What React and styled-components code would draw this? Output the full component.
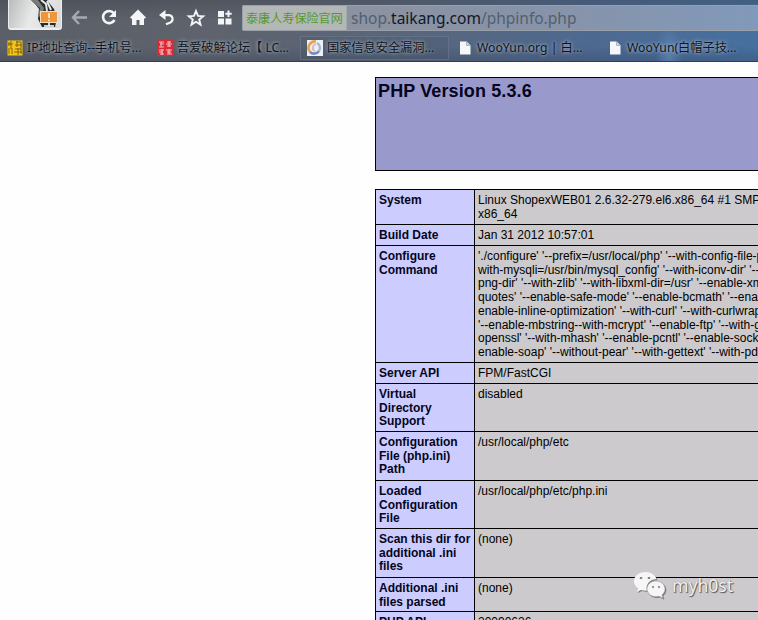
import React from "react";
import styled, { createGlobalStyle } from "styled-components";

const Global = createGlobalStyle`
  * { box-sizing: border-box; }
  body { margin: 0; background: #fff; overflow: hidden; }
`;

const Page = styled.div`
  position: relative;
  width: 758px;
  height: 620px;
  overflow: hidden;
  background: #fefefe;
  font-family: "Liberation Sans", Arial, sans-serif;
`;

const Chrome = styled.header`
  height: 62px;
  background:
    radial-gradient(ellipse 14px 30px at 669px 56px, rgba(130, 180, 225, 0.35), transparent),
    linear-gradient(180deg, rgba(50, 53, 60, 0.3), transparent 35%, transparent 75%, rgba(40, 52, 80, 0.25)),
    linear-gradient(90deg, #5b5f67 0, #5e636d 220px, #5a6679 400px, #4e6990 590px, #47709f 758px);
  border-bottom: 1px solid #343c52;
  overflow: hidden;
`;

const Toolbar = styled.div`
  display: flex;
  height: 35px;
  align-items: flex-start;
`;

const Avatar = styled.div`
  width: 54px;
  height: 30px;
  margin-left: 8px;
  border: 1px solid #eceded;
  border-top: 0;
  border-bottom-width: 2px;
  border-radius: 0 0 3px 3px;
  background: linear-gradient(110deg, #b9bcbc, #e8e9e8 45%, #d8d9d8);
  overflow: hidden;
  svg { display: block; }
`;

const NavIcons = styled.div`
  display: flex;
  margin: 9px 0 0 9px;
  width: 171px;
  gap: 11px;
  svg { display: block; width: 18px; height: 18px; flex: none; overflow: visible; }
`;

const Address = styled.div`
  display: flex;
  flex: 1;
  height: 26px;
  margin-top: 5px;
  border: 1px solid #99a0aa;
  border-right: 0;
  border-radius: 2px 0 0 2px;
  background: linear-gradient(90deg, #8e929c, #8793a9 60%, #8199ba);
`;

const SiteName = styled.div`
  width: 104px;
  padding-left: 3px;
  background: #b3b8b7;
  border-right: 1px solid #a2aaa9;
  color: #56982c;
  font: 12.1px/24px "Noto Sans CJK SC", sans-serif;
  white-space: nowrap;
`;

const Url = styled.div`
  padding-left: 4px;
  color: #52606f;
  font: 15.5px/24px "Noto Sans", sans-serif;
  white-space: nowrap;
  b { font-weight: 400; color: #101824; }
`;

const Bookmarks = styled.nav`
  display: grid;
  grid-template-columns: 149px 151px 149px 151px 158px;
  height: 24px;
  padding-top: 1px;
`;

const Bookmark = styled.div`
  display: flex;
  align-items: center;
  gap: 4px;
  margin-left: ${(p) => (p.$active ? 0 : p.$shift || 0)}px;
  padding-left: 6px;
  border: 1px solid ${(p) => (p.$active ? "rgba(125,145,175,.35)" : "transparent")};
  background: ${(p) => (p.$active ? "rgba(55,72,104,.15)" : "transparent")};
  color: #0d1422;
  white-space: nowrap;
  font: 12.2px/22px "Noto Sans", "Noto Sans CJK SC", sans-serif;
  text-shadow: 0 0 3px rgba(210, 220, 235, 0.6), 0 0 5px rgba(210, 220, 235, 0.5);
  svg { width: 16px; height: 16px; flex: none; }
`;

const Info = styled.main`
  width: 600px;
  margin: 15px 0 0 375px;
  color: #000;
`;

const Banner = styled.h1`
  height: 94px;
  margin: 0 0 18px;
  padding: 3px 2px;
  border: 1px solid #000;
  background: #9999cc;
  color: #05051c;
  font-size: 18px;
  letter-spacing: 0.12px;
  line-height: 21px;
  font-weight: 700;
`;

const Table = styled.div`
  border: 1px solid #000;
  border-bottom: 0;
`;

const Row = styled.div`
  display: grid;
  grid-template-columns: 99px 1fr;
  height: ${(p) => p.$h}px;
  border-bottom: 1px solid #000;
  font-size: 12px;
  line-height: 13.7px;
  white-space: nowrap;
`;

const Key = styled.div`
  padding: 4px 0 0 3px;
  background: #ccccff;
  border-right: 1px solid #000;
  color: #05051c;
  font-weight: 700;
`;

const Value = styled.div`
  padding: 4px 0 0 3px;
  background: #cccacc;
`;

const Line = styled.div``;

const Watermark = styled.div`
  position: absolute;
  left: 633px;
  top: 570px;
  display: flex;
  gap: 6px;
  color: #f2f2f2;
  font: 17.6px/30px "Noto Sans", sans-serif;
  text-shadow: 1px 1px 1px #555, 0 0 1px #777;
  svg { width: 33px; height: 30px; filter: drop-shadow(1px 1px 0.5px #777); }
`;

const rows = [
  { h: 35, key: ["System"], value: ["Linux ShopexWEB01 2.6.32-279.el6.x86_64 #1 SMP", "x86_64"] },
  { h: 21, key: ["Build Date"], value: ["Jan 31 2012 10:57:01"] },
  {
    h: 117,
    key: ["Configure", "Command"],
    value: [
      "'./configure' '--prefix=/usr/local/php' '--with-config-file-path",
      "with-mysqli=/usr/bin/mysql_config' '--with-iconv-dir' '--with",
      "png-dir' '--with-zlib' '--with-libxml-dir=/usr' '--enable-xml'",
      "quotes' '--enable-safe-mode' '--enable-bcmath' '--enable",
      "enable-inline-optimization' '--with-curl' '--with-curlwrappers'",
      "'--enable-mbstring--with-mcrypt' '--enable-ftp' '--with-gd'",
      "openssl' '--with-mhash' '--enable-pcntl' '--enable-sockets'",
      "enable-soap' '--without-pear' '--with-gettext' '--with-pdo",
    ],
  },
  { h: 21, key: ["Server API"], value: ["FPM/FastCGI"] },
  { h: 48, key: ["Virtual", "Directory", "Support"], value: ["disabled"] },
  { h: 49, key: ["Configuration", "File (php.ini)", "Path"], value: ["/usr/local/php/etc"] },
  { h: 48, key: ["Loaded", "Configuration", "File"], value: ["/usr/local/php/etc/php.ini"] },
  { h: 49, key: ["Scan this dir for", "additional .ini", "files"], value: ["(none)"] },
  { h: 34, key: ["Additional .ini", "files parsed"], value: ["(none)"] },
  { h: 21, key: ["PHP API"], value: ["20090626"] },
];

const AvatarArt = () => (
  <svg width="52" height="28" viewBox="9 0 52 28">
    <path d="M31 0H47L54 9 57 18 55 27H42L38 19 39 9 36 5Z" fill="#2a2d2d" />
    <path d="M32 0h6l6 8-2 8-4 1 2-9-8-7z" fill="#777b7b" />
    <path d="M41 0l5 4 1 7M47 1l4 9" stroke="#e5e8e8" strokeWidth="2" fill="none" />
    <rect x="40.5" y="11.500" width="17" height="11" fill="#f0963a" stroke="#f7dfc0" />
    <path d="M49 13v5M49 19.500v1.700" stroke="#fff3dd" strokeWidth="1.600" />
    <path d="M49 23v3M44 26h10" stroke="#fff" strokeWidth="1.600" />
  </svg>
);

const BackIcon = () => (
  <svg viewBox="0 0 18 18" fill="none" stroke="#a6abb2" strokeWidth="2.4"><path d="M8 2L2 8.5 8 15M2 8.500h14" /></svg>
);
const ReloadIcon = () => (
  <svg viewBox="0 0 18 18"><path d="M13.8 4.1A6.1 6.1 0 1 0 14.5 11" fill="none" stroke="#f4f5f6" strokeWidth="2.6" /><path d="M16 1v7H9z" fill="#f4f5f6" /></svg>
);
const HomeIcon = () => (
  <svg viewBox="0 0 18 18" fill="#f4f5f6"><path d="M9 .5L1 8.5 2 9.5h1V16h4.5v-5h3v5H15V9.5h1l1-1z" /></svg>
);
const UndoIcon = () => (
  <svg viewBox="0 0 18 18"><path d="M5 6.2h6.2a3.8 3.8 0 0 1 1.2 7.2L8 15.3" fill="none" stroke="#f4f5f6" strokeWidth="2.2" /><path d="M7.5 1v10L1 6z" fill="#f4f5f6" /></svg>
);
const StarIcon = () => (
  <svg viewBox="0 0 18 18" fill="none" stroke="#f4f5f6" strokeWidth="1.9"><path d="M9 2l2 4.9 5.2.3-4 3.4 1.3 5L9 12.8l-4.5 2.8 1.3-5-4-3.4L7 6.9z" /></svg>
);
const AppsIcon = () => (
  <svg viewBox="0 0 18 18" fill="#f4f5f6"><path d="M2 2h6v6H2zM2 9.5h6v6H2zM9.5 9.5h6v6h-6zM11.5 1.5h2v2.2h2.2v2h-2.2V8h-2V5.7H9.3v-2h2.2z" /></svg>
);

const YellowIcon = () => (
  <svg viewBox="0 0 16 16"><rect x=".5" y=".5" width="15" height="15" fill="#f3c51c" /><path d="M2 2v4M1 4h5M4 1v8M2 8v6M5 8v6M9 2h5M8 5h7M10 1v6M8 9h6M11 8v7M14 2v12M7 12h8" stroke="#695207" strokeWidth=".8" /></svg>
);
const RedIcon = () => (
  <svg viewBox="0 0 16 16"><rect width="16" height="16" fill="#dc2934" /><path d="M2 2h5M3 4h4M4 2v5M2 7h5M10 2h4M9 4h6M10 6h4M12 1v6M2 10h5M2 12h4M3 14h4M5 9v6M9 10h6M10 12h4M10 14h5M12 9v5" stroke="#f6cdd0" strokeWidth=".9" /></svg>
);
const SwirlIcon = () => (
  <svg viewBox="0 0 16 16" fill="none"><rect width="16" height="16" fill="#eef0f3" /><path d="M9 1.5A6.5 6.5 0 0 0 3 12" stroke="#e6a352" strokeWidth="2.6" /><path d="M3 12a6 6 0 0 0 9-1" stroke="#7188c5" strokeWidth="2.6" /><path d="M12 11a5.5 5.5 0 0 0-2-8" stroke="#9db9dc" strokeWidth="2.3" /><path d="M9 4c-4 1-4 6-1 7" stroke="#d6b2bd" strokeWidth="1.7" /></svg>
);
const FileIcon = () => (
  <svg viewBox="0 0 16 16"><path d="M3 1.5h6.5L13.5 5.5V14.5H3z" fill="#f5f7f8" /><path d="M9.5 1.5v4h4" fill="#c6d2df" stroke="#8a99ab" strokeWidth=".6" /></svg>
);

const WechatIcon = () => (
  <svg viewBox="0 0 33 30" fill="#f6f6f6">
    <path d="M12.5 2C6 2 1 6 1 11.2c0 3 1.6 5.5 4 7.2L4 22l4-2c2 .7 4 .8 6 .7-2-7 4-12 9.5-11.5C22.500 5 18 2 12.500 2z" />
    <path d="M23 11c-5 0-9 3.600-9 8s4 7.700 9 7.700l3-.5 4 2-1-3.400c2-1.500 3-3.500 3-5.800 0-4.400-4-8-9-8z" stroke="#999" strokeWidth=".6" />
    <g fill="#777"><ellipse cx="8" cy="8" rx="1.400" ry="1" /><ellipse cx="16" cy="8" rx="1.400" ry="1" /><circle cx="20" cy="17" r="1" /><circle cx="26" cy="17" r="1" /></g>
  </svg>
);

const bookmarks = [
  { icon: YellowIcon, text: "IP地址查询--手机号..." },
  { icon: RedIcon, text: "吾爱破解论坛【 LC...", shift: 1 },
  { icon: SwirlIcon, text: "国家信息安全漏洞...", active: true },
  { icon: FileIcon, text: "WooYun.org | 白...", shift: 1 },
  { icon: FileIcon, text: "WooYun(白帽子技..." },
];

export default function App() {
  return (
    <Page>
      <Global />
      <Chrome>
        <Toolbar>
          <Avatar><AvatarArt /></Avatar>
          <NavIcons>
            <BackIcon /><ReloadIcon /><HomeIcon /><UndoIcon /><StarIcon /><AppsIcon />
          </NavIcons>
          <Address>
            <SiteName>泰康人寿保险官网</SiteName>
            <Url>shop.<b>taikang.com</b>/phpinfo.php</Url>
          </Address>
        </Toolbar>
        <Bookmarks>
          {bookmarks.map(({ icon: Icon, text, active, shift }) => (
            <Bookmark key={text} $active={active} $shift={shift}><Icon /><span>{text}</span></Bookmark>
          ))}
        </Bookmarks>
      </Chrome>
      <Info>
        <Banner>PHP Version 5.3.6</Banner>
        <Table>
          {rows.map((row) => (
            <Row key={row.key[0]} $h={row.h}>
              <Key>{row.key.map((t) => <Line key={t}>{t}</Line>)}</Key>
              <Value>{row.value.map((t) => <Line key={t}>{t}</Line>)}</Value>
            </Row>
          ))}
        </Table>
      </Info>
      <Watermark><WechatIcon /><span>myh0st</span></Watermark>
    </Page>
  );
}
